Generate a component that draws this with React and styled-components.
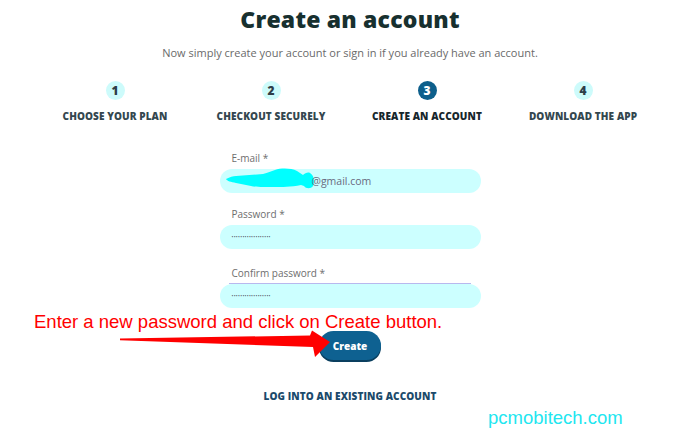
import React from "react";
import styled, { createGlobalStyle } from "styled-components";

const Global = createGlobalStyle`
  html, body { margin: 0; padding: 0; background: #fff; }
  body { font-family: "Open Sans", "DejaVu Sans", sans-serif; }
`;

const Page = styled.div`
  position: relative;
  width: 700px;
  height: 433px;
  display: flex;
  flex-direction: column;
  align-items: center;
  overflow: hidden;
`;

const Title = styled.h1`
  margin: 4px 0 0;
  font-size: 23px;
  line-height: 30px;
  font-weight: 800;
  color: #17302f;
  letter-spacing: 0.2px;
`;

const Subtitle = styled.p`
  margin: 11px 0 0;
  font-size: 11px;
  line-height: 16px;
  color: #6a6a6a;
`;

const Steps = styled.div`
  display: grid;
  grid-template-columns: repeat(4, 156px);
  margin-top: 20px;
  margin-left: -2px;
`;

const Step = styled.div`
  display: flex;
  flex-direction: column;
  align-items: center;
  gap: 10px;
`;

const Circle = styled.div`
  width: 19px;
  height: 19px;
  border-radius: 50%;
  display: flex;
  align-items: center;
  justify-content: center;
  font-size: 12px;
  font-weight: 800;
  background: ${(p) => (p.$active ? "#0d5f8b" : "#cdfbfb")};
  color: ${(p) => (p.$active ? "#fff" : "#2e3e48")};
`;

const StepLabel = styled.div`
  font-size: 10px;
  font-weight: 800;
  line-height: 12px;
  color: ${(p) => (p.$active ? "#16262c" : "#34474f")};
  letter-spacing: 0.1px;
`;

const Form = styled.form`
  width: 261px;
  margin-top: 29px;
  display: flex;
  flex-direction: column;
`;

const Label = styled.label`
  display: block;
  padding-left: 12px;
  font-size: 10px;
  line-height: 14px;
  color: #6e6e6e;
  margin-bottom: 4px;
`;

const Group = styled.div`
  margin-bottom: ${(p) => p.$mb}px;
`;

const Field = styled.div`
  position: relative;
  height: 24px;
  border-radius: 12px;
  background: #ccffff;
  display: flex;
  align-items: center;
  padding-left: 12px;
  font-size: 10.5px;
  color: #6a6a80;
  &::before {
    content: "";
    display: ${(p) => (p.$focused ? "block" : "none")};
    position: absolute;
    left: 9px;
    right: 10px;
    top: -1px;
    height: 1px;
    background: #b8b8ee;
  }
`;

const Dots = styled.span`
  font-size: 5px;
  letter-spacing: 0.3px;
  color: #5a5a6a;
  line-height: 1;
`;

const Scribble = styled.svg`
  flex: none;
  margin-left: -7px;
`;

const EmailRest = styled.span`
  margin-left: -3px;
`;

const Actions = styled.div`
  display: flex;
  justify-content: center;
`;

const CreateButton = styled.button`
  width: 62px;
  height: 29px;
  border: none;
  border-radius: 15px;
  background: #0e6191;
  box-shadow: 0 2px 0 #0a3f5f;
  color: #fff;
  font-family: "Open Sans", sans-serif;
  font-size: 10px;
  font-weight: 800;
`;

const LoginLink = styled.a`
  margin-top: 29px;
  font-size: 10px;
  font-weight: 800;
  color: #1b4a6b;
  text-decoration: none;
  letter-spacing: 0.1px;
`;

const Annotation = styled.div`
  position: absolute;
  left: 34px;
  top: 311px;
  font-family: "Liberation Sans", Arial, sans-serif;
  font-size: 18.5px;
  line-height: 22px;
  color: #ff0000;
  white-space: nowrap;
`;

const ArrowSvg = styled.svg`
  position: absolute;
  left: 0;
  top: 0;
  pointer-events: none;
`;

const Watermark = styled.div`
  position: absolute;
  left: 488px;
  top: 407px;
  font-family: "Liberation Sans", Arial, sans-serif;
  font-size: 18.5px;
  line-height: 22px;
  color: #22e6f0;
`;

const steps = [
  { n: 1, label: "CHOOSE YOUR PLAN" },
  { n: 2, label: "CHECKOUT SECURELY" },
  { n: 3, label: "CREATE AN ACCOUNT", active: true },
  { n: 4, label: "DOWNLOAD THE APP" },
];

export default function App() {
  return (
    <Page>
      <Global />
      <Title>Create an account</Title>
      <Subtitle>Now simply create your account or sign in if you already have an account.</Subtitle>
      <Steps>
        {steps.map((s) => (
          <Step key={s.n}>
            <Circle $active={s.active}>{s.n}</Circle>
            <StepLabel $active={s.active}>{s.label}</StepLabel>
          </Step>
        ))}
      </Steps>
      <Form onSubmit={(e) => e.preventDefault()}>
        <Group $mb={14}>
          <Label>E-mail *</Label>
          <Field>
            <Scribble width="90" height="26" viewBox="0 0 90 26">
              <path
                d="M1 11 C5 9 8 8 11 8 L38 6 C43 5 46 3 50 2 C56 0 66 0 72 3 L78 7 C80 5 83 4 85 5 C89 7 90 14 88 18 C86 21 81 21 79 18 L76 17 C66 19 56 19 51 19 C40 19 30 19 26 18 L11 15 C6 14 2 13 1 11 Z"
                fill="#00ffff"
              />
            </Scribble>
            <EmailRest>@gmail.com</EmailRest>
          </Field>
        </Group>
        <Group $mb={17}>
          <Label>Password *</Label>
          <Field>
            <Dots>••••••••••••••••••</Dots>
          </Field>
        </Group>
        <Group $mb={23}>
          <Label>Confirm password *</Label>
          <Field $focused>
            <Dots>••••••••••••••••••</Dots>
          </Field>
        </Group>
        <Actions>
          <CreateButton type="submit">Create</CreateButton>
        </Actions>
      </Form>
      <LoginLink href="#">LOG INTO AN EXISTING ACCOUNT</LoginLink>
      <Annotation>Enter a new password and click on Create button.</Annotation>
      <ArrowSvg width="700" height="433" viewBox="0 0 700 433">
        <polygon
          points="120,338.5 310,335.5 312,330.5 330,342 315,357 313,347 120,340.3"
          fill="#ff0000"
        />
      </ArrowSvg>
      <Watermark>pcmobitech.com</Watermark>
    </Page>
  );
}
